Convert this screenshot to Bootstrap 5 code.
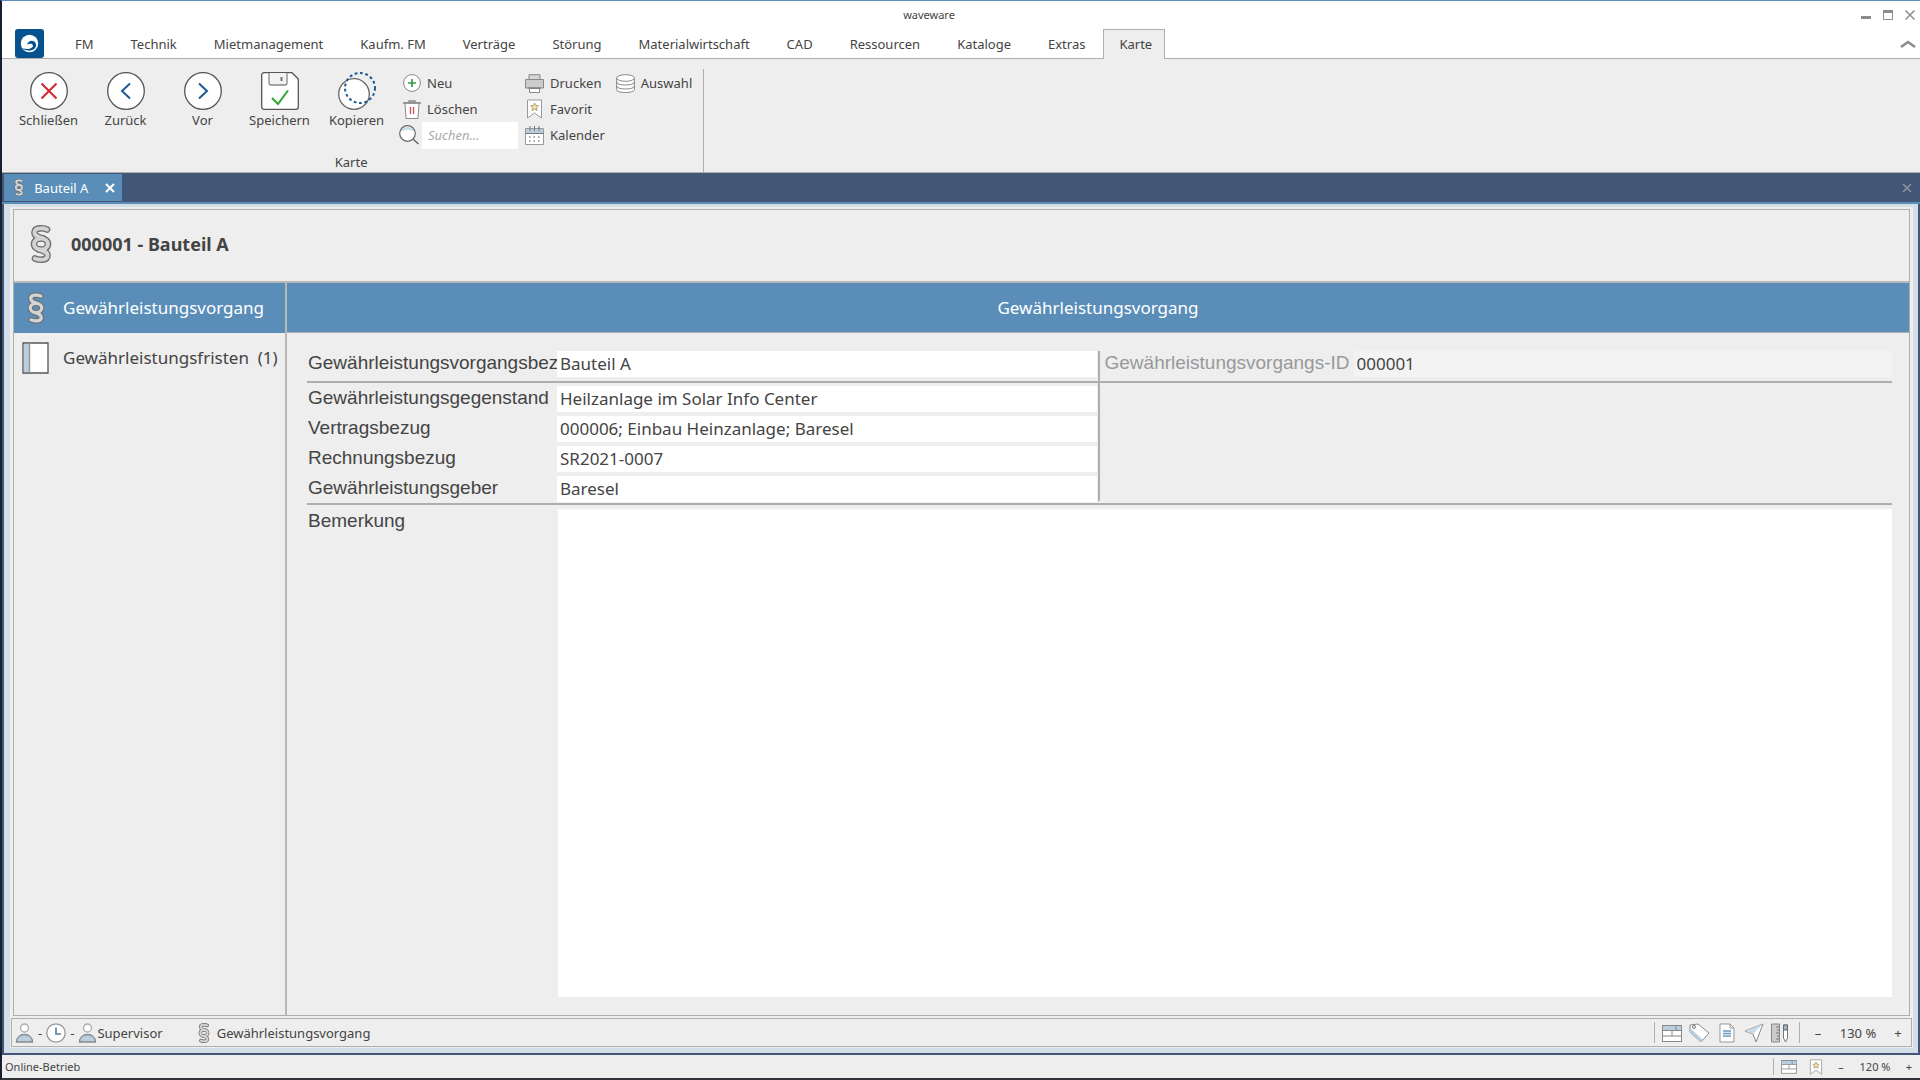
<!DOCTYPE html>
<html lang="de">
<head>
<meta charset="utf-8">
<meta name="viewport" content="width=device-width, initial-scale=1">
<title>waveware</title>
<link rel="stylesheet" href="https://cdn.jsdelivr.net/npm/bootstrap@5.3.0/dist/css/bootstrap.min.css">
<style>
  :root { --ww-blue:#5a8eb9; --ww-navy:#425678; --ww-grey:#eee; --ww-line:#aeaeae; --ww-text:#444; }
  body { font-family:"Noto Sans","Open Sans",sans-serif; font-size:13px; line-height:20px; color:var(--ww-text); background:var(--ww-grey); }
  button { color:inherit; background:none; border:0; padding:0; }
  svg { display:block; flex:none; }
  .app-shell { border-left:2px solid #16202e; border-top:1px solid var(--ww-blue); border-bottom:2px solid #33343a; }
  .title-bar { height:28px; font-size:11px; }
  .win-tools { right:5px; top:8px; gap:12px; }
  .menu-tabs { border-bottom:1px solid var(--ww-line); padding-left:13px; height:30px; }
  .menu-tabs .nav-link { color:var(--ww-text); padding:5px 18px 4px 19px; line-height:20px; }
  .menu-tabs .nav { margin-left:12px; }
  .menu-tabs .nav-item { margin-bottom:-1px; }
  .menu-tabs .nav-link.active { background:var(--ww-grey); border:1px solid var(--ww-line); border-bottom:0; padding:4px 12px 5px 15px; }
  .ribbon { border-bottom:1px solid var(--ww-line); height:114px; }
  .ribbon-group { padding:11px 12px 0 8px; position:relative; }
  .ribbon-group::after { content:""; position:absolute; right:0; top:10px; bottom:0; width:1px; background:var(--ww-line); }
  .big-tool { width:77px; }
  .big-tool svg { margin:2px auto 0; }
  .tool-grid button { height:26px; gap:6px; }
  .tool-grid { gap:7px; }
  .search-row { height:26px; gap:3px; }
  .tool-grid .find-box { width:96px; height:27px; font-size:13px; font-style:italic; padding:0 6px; border:0; border-radius:0; }
  .find-box::placeholder { color:#aaa; }
  .doc-tabs { background:var(--ww-navy); border-bottom:2px solid var(--ww-blue); padding:0 8px 0 2px; height:31px; }
  .doc-tab { background:var(--ww-blue); color:#fff; width:118px; padding:0 7px 0 10px; height:27px; }
  .doc-frame { background:#d3dee7; border:solid var(--ww-navy); border-width:0 2px 2px; padding:3px 5px 5px 6px; }
  .doc-inner { background:var(--ww-grey); padding:2px 1px 1px; }
  .record { border:1px solid var(--ww-line); margin:0 2px; }
  .record-head { height:73px; padding:0 0 4px 15px; gap:18px; border-bottom:2px solid #b8b8b8; font-size:18px; font-weight:700; }
  .side-list { width:273px; border-right:2px solid #b8b8b8; border-radius:0; font-size:17px; }
  .side-list .list-group-item { height:50px; background:none; color:var(--ww-text); border:0; border-radius:0; padding:0 0 0 8px; gap:14px; }
  .side-list .list-group-item.active { background:var(--ww-blue); color:#fff; }
  .side-icon { width:27px; }
  .pane-title { background:var(--ww-blue); color:#fff; height:50px; font-size:17px; line-height:24px; border-bottom:1px solid var(--ww-line); font-weight:400; }
  .sheet { padding:18px 17px 18px 20px; }
  .field-row { height:30px; align-items:flex-start; }
  .field-row label, .note-row label { width:250px; flex:none; padding-left:1px; white-space:nowrap; font-family:"Liberation Sans",Arial,sans-serif; font-size:19px; line-height:24px; }
  .field-row .form-control { height:26px; padding:0 3px; border:0; border-radius:0; background:#fff; font-size:17px; line-height:26px; color:var(--ww-text); }
  .field-row .form-control[readonly] { background:#f3f3f3; }
  .first-band, .second-band { border-bottom:2px solid var(--ww-line); }
  .col-rule { border-right:2px solid var(--ww-line); padding-right:1px; }
  .second-band { padding-bottom:2px; }
  .second-band .col-rule { padding-top:3px; height:118px; }
  .note-row { padding-top:4px; }
  .note-row textarea { border:0; border-radius:0; resize:none; margin-left:1px; font-size:17px; }
  .dim { color:#999; }
  .status-strip { border:1px solid var(--ww-line); height:29px; margin-top:2px; padding:0 3px; }
  .sep { width:1px; background:var(--ww-line); align-self:stretch; margin:3px 0; }
  .tool-icons { gap:7px; padding:0 10px 0 7px; }
  .app-foot { height:23px; font-size:11px; padding:0 1px 0 3px; }
  .foot-icons { gap:12px; padding:0 8px 0 7px; }
  .pct { width:52px; text-align:center; }
  .app-foot .pct { width:48px; }
  .step { width:20px; text-align:center; }
</style>
</head>
<body>
<svg width="0" height="0" class="position-absolute" aria-hidden="true">
  <defs>
    <symbol id="i-par" viewBox="0 0 22 38">
      <g fill="none" stroke-linecap="round">
        <g stroke="#6c6c6c" stroke-width="6.600"><ellipse cx="11" cy="19" rx="7" ry="5.600"/><path d="M17 4.500C14 3 4.500 2 4.500 7.500C4.500 11 8 12 13 13.500"/><path d="M5 33.500C8 35 17.500 36 17.500 30.500C17.500 27 14 26 9 24.500"/></g>
        <g stroke="#d4d4d4" stroke-width="4"><ellipse cx="11" cy="19" rx="7" ry="5.600"/><path d="M17 4.500C14 3 4.500 2 4.500 7.500C4.500 11 8 12 13 13.500"/><path d="M5 33.500C8 35 17.500 36 17.500 30.500C17.500 27 14 26 9 24.500"/></g>
      </g>
    </symbol>
    <symbol id="i-user" viewBox="0 0 18 20"><circle cx="9" cy="5" r="4" fill="#fff" stroke="#aaa" stroke-width="1.300"/><path d="M1 19C1 9 17 9 17 19Z" fill="#b9cfe0" stroke="#8a8a8a" stroke-width="1.300"/></symbol>
    <symbol id="i-form" viewBox="0 0 20 18"><rect x=".5" y="1.500" width="19" height="16" fill="#fff" stroke="#888"/><path d="M1 2h18v4H1z" fill="#b9cfe0"/><path d="M.5 1.500h19M.5 6.500h19M.5 12h19M10 6.500v5.500M14 2v4" stroke="#888" fill="none"/></symbol>
    <symbol id="i-fav" viewBox="0 0 16 20"><path d="M1 1h14v18l-7-5-7 5z" fill="#fff" stroke="#999"/><path d="M8 4l1.200 2.400 2.800.4-2 1.900.5 2.700L8 10.200 5.500 11.400 6 8.700 4 6.800l2.800-.4z" fill="#f1deb0" stroke="#a58b55" stroke-width=".8"/></symbol>
  </defs>
</svg>
<div class="app-shell d-flex flex-column vh-100">
  <header class="bg-white">
    <div class="title-bar position-relative d-flex align-items-center justify-content-center">
      <span class="pe-5 me-3">waveware</span>
      <div class="win-tools position-absolute d-flex">
        <button type="button" aria-label="Minimieren"><svg width="10" height="12"><path d="M0 7h10v3H0z" fill="#8b8b8b"/></svg></button>
        <button type="button" aria-label="Maximieren"><svg width="10" height="12"><path d="M.5 2h9v8.500h-9z" fill="none" stroke="#8b8b8b"/><path d="M0 1h10v3H0z" fill="#8b8b8b"/></svg></button>
        <button type="button" aria-label="Beenden"><svg width="10" height="12"><path d="M.5 1.500l9 9M9.500 1.500l-9 9" stroke="#8b8b8b" stroke-width="1.500"/></svg></button>
      </div>
    </div>
    <nav class="menu-tabs d-flex">
      <svg width="29" height="29" viewBox="0 0 29 29"><rect width="29" height="29" rx="3" fill="#05528f"/><circle cx="14.500" cy="14.500" r="8.700" fill="#fff"/><path d="M7.500 19C13 21.500 19 19 17.800 16C16.800 13.800 14 15 12 15.500C13.500 10.500 19.500 10.500 21 15C21.800 19 18 22 13.500 21.600C10.500 21.300 8.500 20.500 7.500 19Z" fill="#05528f"/></svg>
      <ul class="nav flex-nowrap">
        <li class="nav-item"><a class="nav-link" href="#">FM</a></li>
        <li class="nav-item"><a class="nav-link" href="#">Technik</a></li>
        <li class="nav-item"><a class="nav-link" href="#">Mietmanagement</a></li>
        <li class="nav-item"><a class="nav-link" href="#">Kaufm. FM</a></li>
        <li class="nav-item"><a class="nav-link" href="#">Verträge</a></li>
        <li class="nav-item"><a class="nav-link" href="#">Störung</a></li>
        <li class="nav-item"><a class="nav-link" href="#">Materialwirtschaft</a></li>
        <li class="nav-item"><a class="nav-link" href="#">CAD</a></li>
        <li class="nav-item"><a class="nav-link" href="#">Ressourcen</a></li>
        <li class="nav-item"><a class="nav-link" href="#">Kataloge</a></li>
        <li class="nav-item"><a class="nav-link" href="#">Extras</a></li>
        <li class="nav-item"><a class="nav-link active" aria-current="page" href="#">Karte</a></li>
      </ul>
      <button type="button" class="ms-auto me-1" aria-label="Menüband einklappen"><svg width="16" height="8"><path d="M1 7l7-5 7 5" fill="none" stroke="#8b8b8b" stroke-width="2.500"/></svg></button>
    </nav>
  </header>

  <section class="ribbon d-flex">
    <div class="ribbon-group d-flex flex-column">
      <div class="d-flex align-items-start">
        <button type="button" class="big-tool"><svg width="38" height="38"><circle cx="19" cy="19" r="18.300" fill="#fff" stroke="#555" stroke-width="1.300"/><path d="M11.500 11.500l15 15M26.500 11.500l-15 15" stroke="#d9232e" stroke-width="2"/></svg>Schließen</button>
        <button type="button" class="big-tool"><svg width="38" height="38"><circle cx="19" cy="19" r="18.300" fill="#fff" stroke="#555" stroke-width="1.300"/><path d="M23 11.500l-8 7.500 8 7.500" fill="none" stroke="#1c5a94" stroke-width="2"/></svg>Zurück</button>
        <button type="button" class="big-tool"><svg width="38" height="38"><circle cx="19" cy="19" r="18.300" fill="#fff" stroke="#555" stroke-width="1.300"/><path d="M15 11.500l8 7.500-8 7.500" fill="none" stroke="#1c5a94" stroke-width="2"/></svg>Vor</button>
        <button type="button" class="big-tool"><svg width="38" height="38"><path d="M3 .7h28l6.300 6.300V35a2.300 2.300 0 0 1-2.300 2.300H3A2.300 2.300 0 0 1 .7 35V3A2.300 2.300 0 0 1 3 .7z" fill="#fff" stroke="#555" stroke-width="1.300"/><path d="M8 1v10a2 2 0 0 0 2 2h14a2 2 0 0 0 2-2V1" fill="#f2f2f2" stroke="#888" stroke-width="1.300"/><path d="M20.500 5v4" stroke="#777" stroke-width="2"/><path d="M11 26l6 6 10-13.500" fill="none" stroke="#29a829" stroke-width="2"/></svg>Speichern</button>
        <button type="button" class="big-tool"><svg width="38" height="38"><circle cx="16" cy="22" r="15.300" fill="#fff" stroke="#666" stroke-width="1.300"/><circle cx="22" cy="16" r="15" fill="none" stroke="#1c5a94" stroke-width="2" stroke-dasharray="2.800 2.600"/></svg>Kopieren</button>
        <div class="tool-grid d-flex">
          <div class="d-flex flex-column ps-1">
            <button type="button" class="d-flex align-items-center ms-1"><svg width="18" height="18"><circle cx="9" cy="9" r="8.400" fill="#fff" stroke="#888"/><path d="M9 5v8M5 9h8" stroke="#3a9a4a" stroke-width="1.700"/></svg>Neu</button>
            <button type="button" class="d-flex align-items-center ms-1"><svg width="18" height="19"><path d="M2 3h14l-1 15.500H3z" fill="#fff" stroke="#888"/><path d="M0 3h18M6 3V1h6v2" fill="none" stroke="#888" stroke-width="1.300"/><path d="M7.500 7v7M10.500 7v7" stroke="#d04a55" stroke-width="1.300"/></svg>Löschen</button>
            <div class="search-row d-flex align-items-center"><svg width="20" height="20"><circle cx="8.500" cy="8.500" r="7.800" fill="#fff" stroke="#666" stroke-width="1.200"/><path d="M2 7a6.700 6.700 0 0 1 13 0c-4-3-9-3-13 0z" fill="#c5dcec"/><path d="M14 14l5.500 5" stroke="#666" stroke-width="1.500"/></svg><input class="find-box form-control" type="text" placeholder="Suchen..." aria-label="Suchen"></div>
          </div>
          <div class="d-flex flex-column">
            <button type="button" class="d-flex align-items-center"><svg width="19" height="19"><path d="M4 5V.7h11V5" fill="#d5d5d5" stroke="#888"/><path d="M.5 5.500h18V14H.5z" fill="#ccc" stroke="#888"/><path d="M4.500 14.500h10v4h-10z" fill="#fff" stroke="#888"/><path d="M3 14h13" stroke="#777"/></svg>Drucken</button>
            <button type="button" class="d-flex align-items-center"><svg width="19" height="20"><use href="#i-fav"/></svg>Favorit</button>
            <button type="button" class="d-flex align-items-center"><svg width="19" height="19"><path d="M.5 2.500h18v16H.5z" fill="#fff" stroke="#999"/><path d="M1 3h17v4.500H1z" fill="#b9cfe0"/><path d="M.5 7.500h18M5 0v5M9.500 0v5M14 0v5" stroke="#777"/><path d="M4 11h12M4 15h12" stroke="#888" stroke-width="1.600" stroke-dasharray="1.500 3"/></svg>Kalender</button>
          </div>
          <div class="ps-1">
            <button type="button" class="d-flex align-items-center"><svg width="19" height="19"><path d="M.6 4v11.500c0 4 17.800 4 17.800 0V4" fill="#fff" stroke="#888"/><ellipse cx="9.500" cy="4" rx="8.900" ry="3.300" fill="#fff" stroke="#888"/><path d="M.6 8c0 4 17.800 4 17.800 0M.6 12c0 4 17.800 4 17.800 0" fill="none" stroke="#888"/></svg>Auswahl</button>
          </div>
        </div>
      </div>
      <div class="text-center mt-1">Karte</div>
    </div>
  </section>

  <div class="doc-tabs d-flex align-items-center justify-content-between">
    <div class="doc-tab d-flex align-items-center">
      <svg width="10" height="17"><use href="#i-par"/></svg><span class="ms-2">&thinsp;Bauteil A</span>
      <button type="button" class="ms-auto" aria-label="Bauteil A schließen"><svg width="10" height="10"><path d="M1 1l8 8M9 1l-8 8" stroke="#fff" stroke-width="2"/></svg></button>
    </div>
    <button type="button" aria-label="Tab schließen"><svg width="10" height="10"><path d="M1 1l8 8M9 1l-8 8" stroke="#8f959e" stroke-width="1.500"/></svg></button>
  </div>

  <main class="doc-frame flex-grow-1 d-flex flex-column">
    <div class="doc-inner flex-grow-1 d-flex flex-column">
      <div class="record flex-grow-1 d-flex flex-column">
        <div class="record-head d-flex align-items-center"><svg width="24" height="38"><use href="#i-par"/></svg><span>000001 - Bauteil A</span></div>
        <div class="d-flex flex-grow-1">
          <nav class="side-list list-group flex-shrink-0">
            <a href="#" class="list-group-item active d-flex align-items-center" aria-current="true"><span class="side-icon d-flex justify-content-center"><svg width="18" height="32"><use href="#i-par"/></svg></span>Gewährleistungsvorgang</a>
            <a href="#" class="list-group-item d-flex align-items-center text-nowrap"><span class="side-icon"><svg width="27" height="32"><path d="M1 1h25v30H1z" fill="#fff" stroke="#555" stroke-width="1.300"/><path d="M2 2h5v28H2z" fill="#b9cfe0"/><path d="M7.500 1v30" stroke="#999" stroke-width="1.500"/></svg></span><span>Gewährleistungsfristen&nbsp; (1)</span></a>
          </nav>
          <section class="flex-grow-1 d-flex flex-column">
            <h1 class="pane-title d-flex align-items-center justify-content-center m-0">Gewährleistungsvorgang</h1>
            <form class="sheet flex-grow-1 d-flex flex-column">
              <div class="first-band row g-0">
                <div class="col-6 col-rule"><div class="field-row d-flex"><label for="bez">Gewährleistungsvorgangsbez</label><input id="bez" class="form-control" value="Bauteil A"></div></div>
                <div class="col-6"><div class="field-row d-flex ps-1"><label for="vid" class="dim">Gewährleistungsvorgangs-ID</label><input id="vid" class="form-control" value="000001" readonly></div></div>
              </div>
              <div class="second-band row g-0">
                <div class="col-6 col-rule">
                  <div class="field-row d-flex"><label for="gegen">Gewährleistungsgegenstand</label><input id="gegen" class="form-control" value="Heilzanlage im Solar Info Center"></div>
                  <div class="field-row d-flex"><label for="vertrag">Vertragsbezug</label><input id="vertrag" class="form-control" value="000006; Einbau Heinzanlage; Baresel"></div>
                  <div class="field-row d-flex"><label for="rech">Rechnungsbezug</label><input id="rech" class="form-control" value="SR2021-0007"></div>
                  <div class="field-row d-flex"><label for="geber">Gewährleistungsgeber</label><input id="geber" class="form-control" value="Baresel"></div>
                </div>
              </div>
              <div class="note-row d-flex flex-grow-1"><label for="bem">Bemerkung</label><textarea id="bem" class="form-control"></textarea></div>
            </form>
          </section>
        </div>
      </div>
      <div class="status-strip d-flex align-items-center">
        <svg width="19" height="20"><use href="#i-user"/></svg><span class="mx-1">-</span>
        <svg width="20" height="20"><circle cx="10" cy="10" r="9.200" fill="#fff" stroke="#999" stroke-width="1.300"/><path d="M10 4.500V11h5" fill="none" stroke="#5a7d9c" stroke-width="1.600"/></svg><span class="mx-1">-</span>
        <svg width="19" height="20"><use href="#i-user"/></svg><span>Supervisor</span>
        <svg class="ms-4 ps-2 me-1" width="26" height="20"><use href="#i-par"/></svg><span>Gewährleistungsvorgang</span>
        <span class="sep ms-auto"></span>
        <div class="tool-icons d-flex align-items-center">
          <svg width="20" height="18"><use href="#i-form"/></svg>
          <svg width="21" height="20"><path d="M1 2l8-1 11 9-8 9L1 9z" fill="#fff" stroke="#888"/><path d="M1 9l11 10 2-2L1 5z" fill="#b9cfe0"/><circle cx="5" cy="4" r="1.500" fill="#fff" stroke="#777"/></svg>
          <svg width="20" height="20"><path d="M3 1h10l4 4v14H3z" fill="#fff" stroke="#999"/><path d="M13 1v4h4" fill="none" stroke="#999"/><path d="M6 8h8M6 10.500h8M6 13h8" stroke="#6c95b8" stroke-width="1.500"/></svg>
          <svg width="20" height="20"><path d="M1 8L19 1l-7 18-3-8z" fill="#fff" stroke="#888"/><path d="M1 8L19 1 9 11z" fill="#c9dbe8"/></svg>
          <svg width="18" height="20"><path d="M.5 1h8v18h-8z" fill="#ccc" stroke="#888"/><path d="M5 4h3M6 7h2M5 10h3M6 13h2M5 16h3" stroke="#777"/><path d="M12.500 2h4v13l-2 4-2-4z" fill="#fff" stroke="#777"/><path d="M12.500 2h4v5h-4z" fill="#9ab4c9" stroke="#666"/></svg>
        </div>
        <span class="sep"></span>
        <button type="button" class="step ms-2" aria-label="Verkleinern">–</button><span class="pct ms-1">130&nbsp;%</span><button type="button" class="step ms-1" aria-label="Vergrößern">+</button>
      </div>
    </div>
  </main>

  <footer class="app-foot d-flex align-items-center">
    <span>Online-Betrieb</span>
    <span class="sep ms-auto"></span>
    <div class="foot-icons d-flex align-items-center">
      <svg width="16" height="15"><use href="#i-form"/></svg>
      <svg width="14" height="16"><use href="#i-fav"/></svg>
    </div>
    <button type="button" class="step" aria-label="Verkleinern">–</button><span class="pct">120&nbsp;%</span><button type="button" class="step" aria-label="Vergrößern">+</button>
  </footer>
</div>
<script src="https://cdn.jsdelivr.net/npm/bootstrap@5.3.0/dist/js/bootstrap.bundle.min.js"></script>
</body>
</html>
